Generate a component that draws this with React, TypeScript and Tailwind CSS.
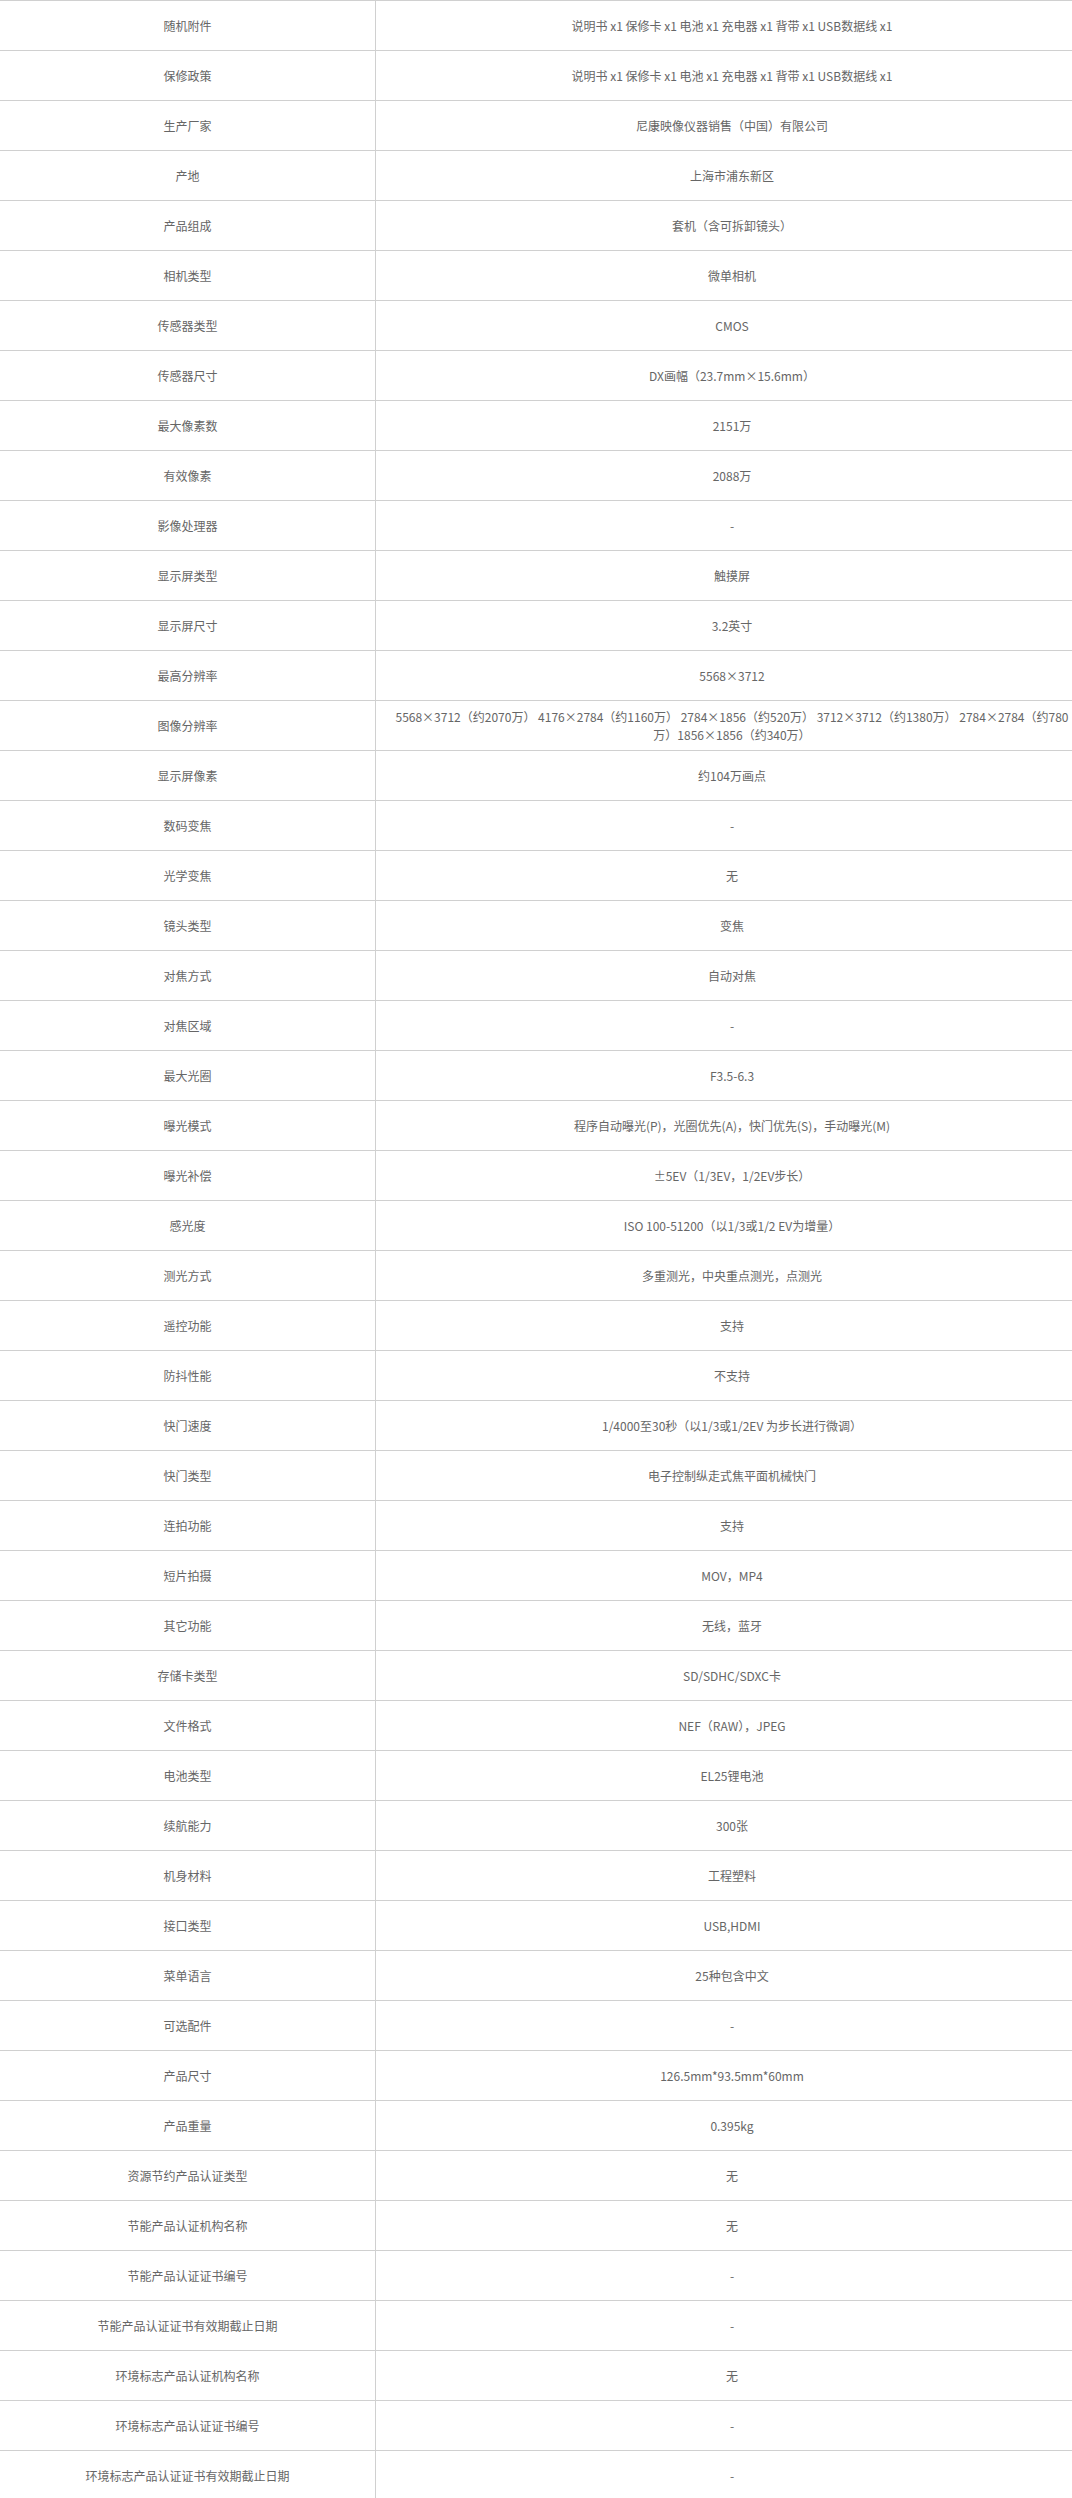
import React from "react";

const rows: [string, React.ReactNode][] = [
  ["随机附件", "说明书 x1 保修卡 x1 电池 x1 充电器 x1 背带 x1 USB数据线 x1"],
  ["保修政策", "说明书 x1 保修卡 x1 电池 x1 充电器 x1 背带 x1 USB数据线 x1"],
  ["生产厂家", "尼康映像仪器销售（中国）有限公司"],
  ["产地", "上海市浦东新区"],
  ["产品组成", "套机（含可拆卸镜头）"],
  ["相机类型", "微单相机"],
  ["传感器类型", "CMOS"],
  ["传感器尺寸", "DX画幅（23.7mm×15.6mm）"],
  ["最大像素数", "2151万"],
  ["有效像素", "2088万"],
  ["影像处理器", "-"],
  ["显示屏类型", "触摸屏"],
  ["显示屏尺寸", "3.2英寸"],
  ["最高分辨率", "5568×3712"],
  [
    "图像分辨率",
    <>
      5568×3712（约2070万） 4176×2784（约1160万） 2784×1856（约520万） 3712×3712（约1380万） 2784×2784（约780
      <br />
      万）1856×1856（约340万）
    </>,
  ],
  ["显示屏像素", "约104万画点"],
  ["数码变焦", "-"],
  ["光学变焦", "无"],
  ["镜头类型", "变焦"],
  ["对焦方式", "自动对焦"],
  ["对焦区域", "-"],
  ["最大光圈", "F3.5-6.3"],
  ["曝光模式", "程序自动曝光(P)，光圈优先(A)，快门优先(S)，手动曝光(M)"],
  ["曝光补偿", "±5EV（1/3EV，1/2EV步长）"],
  ["感光度", "ISO 100-51200（以1/3或1/2 EV为增量）"],
  ["测光方式", "多重测光，中央重点测光，点测光"],
  ["遥控功能", "支持"],
  ["防抖性能", "不支持"],
  ["快门速度", "1/4000至30秒（以1/3或1/2EV 为步长进行微调）"],
  ["快门类型", "电子控制纵走式焦平面机械快门"],
  ["连拍功能", "支持"],
  ["短片拍摄", "MOV，MP4"],
  ["其它功能", "无线，蓝牙"],
  ["存储卡类型", "SD/SDHC/SDXC卡"],
  ["文件格式", "NEF（RAW），JPEG"],
  ["电池类型", "EL25锂电池"],
  ["续航能力", "300张"],
  ["机身材料", "工程塑料"],
  ["接口类型", "USB,HDMI"],
  ["菜单语言", "25种包含中文"],
  ["可选配件", "-"],
  ["产品尺寸", "126.5mm*93.5mm*60mm"],
  ["产品重量", "0.395kg"],
  ["资源节约产品认证类型", "无"],
  ["节能产品认证机构名称", "无"],
  ["节能产品认证证书编号", "-"],
  ["节能产品认证证书有效期截止日期", "-"],
  ["环境标志产品认证机构名称", "无"],
  ["环境标志产品认证证书编号", "-"],
  ["环境标志产品认证证书有效期截止日期", "-"],
];

export default function App() {
  return (
    <div className="w-[1072px] overflow-hidden bg-white">
      <div
        className="w-[1088px] text-[12px] text-[#666666]"
        style={{ fontFamily: '"Noto Sans CJK SC", "Noto Sans", sans-serif' }}
      >
        {rows.map(([label, value], i) => (
          <div key={i} className="flex h-[50px] border-t border-[#d0d0d0]">
            <div className="w-[376px] shrink-0 border-r border-[#d0d0d0] flex items-center justify-center px-[15px] text-center leading-[18px]">
              {label}
            </div>
            <div className="flex-1 flex items-center justify-center px-[15px] text-center leading-[18px]">
              <div>{value}</div>
            </div>
          </div>
        ))}
      </div>
    </div>
  );
}
